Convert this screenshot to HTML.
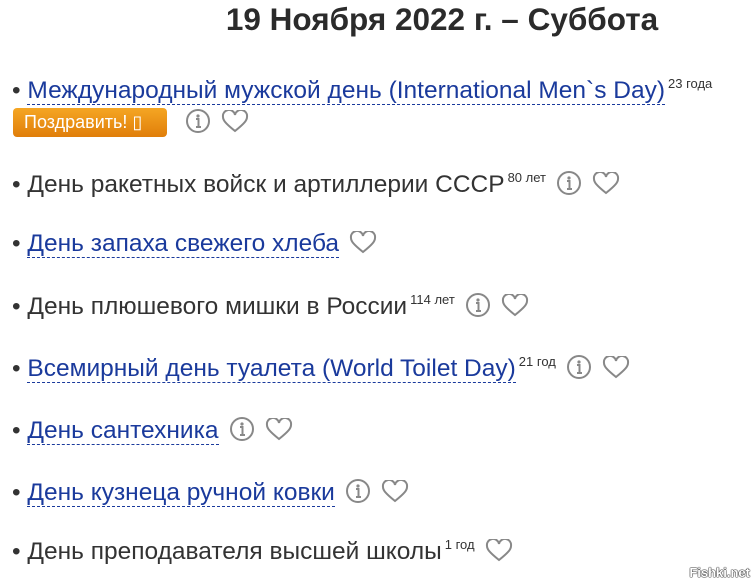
<!DOCTYPE html><html><head><meta charset="utf-8"><style>
body{margin:0;width:755px;height:584px;background:#fff;font-family:"Liberation Sans",Arial,sans-serif;color:#333;position:relative;overflow:hidden}
h1{position:absolute;left:0;width:884px;top:1px;margin:0;text-align:center;font-size:31.5px;font-weight:bold;color:#2b2b2b;line-height:36px}
.r{position:absolute;left:12px;font-size:24.5px;line-height:26px;white-space:nowrap}
a{color:#1a3a9c;text-decoration:none;border-bottom:1px dashed #1a3a9c}
sup{font-size:13px;vertical-align:0;position:relative;top:-10px;margin-left:3px}
svg{vertical-align:-4px;margin-left:10px}
.btn{position:absolute;left:13px;top:108px;width:154px;height:29px;border-radius:4px;background:linear-gradient(#f5a623,#e07e0a);color:#fff;font-size:18px;line-height:29px;padding-left:11px;box-sizing:border-box}
.wm{position:absolute;right:5px;bottom:4px;font-size:13px;font-weight:bold;color:#fff;text-shadow:0 0 1px #000,0 0 1px #000,0 0 1px #000}
</style></head><body>
<h1>19 Ноября 2022 г. – Суббота</h1>
<div class="r" style="top:78px">• <a>Международный мужской день (International Men`s Day)</a><sup>23 года</sup></div>
<div class="btn">Поздравить! ▯</div>
<div class="r" style="left:175px;top:108px"><svg width="26" height="26" viewBox="0 0 26 26"><circle cx="13" cy="13" r="11" fill="none" stroke="#888" stroke-width="2"/><circle cx="13" cy="8" r="1.6" fill="#888"/><path d="M11 11h2.5v8M11 19h5" stroke="#888" stroke-width="2" fill="none"/></svg><svg width="28" height="24" viewBox="0 0 28 24"><path d="M14 21C4 13 2 10 2 7a5.5 5.5 0 0 1 12-2a5.5 5.5 0 0 1 12 2c0 3-2 6-12 14z" fill="none" stroke="#888" stroke-width="2"/></svg></div>
<div class="r" style="top:170px">• День ракетных войск и артиллерии СССР<sup>80 лет</sup><svg width="26" height="26" viewBox="0 0 26 26"><circle cx="13" cy="13" r="11" fill="none" stroke="#888" stroke-width="2"/><circle cx="13" cy="8" r="1.6" fill="#888"/><path d="M11 11h2.5v8M11 19h5" stroke="#888" stroke-width="2" fill="none"/></svg><svg width="28" height="24" viewBox="0 0 28 24"><path d="M14 21C4 13 2 10 2 7a5.5 5.5 0 0 1 12-2a5.5 5.5 0 0 1 12 2c0 3-2 6-12 14z" fill="none" stroke="#888" stroke-width="2"/></svg></div>
<div class="r" style="top:231px">• <a>День запаха свежего хлеба</a><svg width="28" height="24" viewBox="0 0 28 24"><path d="M14 21C4 13 2 10 2 7a5.5 5.5 0 0 1 12-2a5.5 5.5 0 0 1 12 2c0 3-2 6-12 14z" fill="none" stroke="#888" stroke-width="2"/></svg></div>
<div class="r" style="top:292px">• День плюшевого мишки в России<sup>114 лет</sup><svg width="26" height="26" viewBox="0 0 26 26"><circle cx="13" cy="13" r="11" fill="none" stroke="#888" stroke-width="2"/><circle cx="13" cy="8" r="1.6" fill="#888"/><path d="M11 11h2.5v8M11 19h5" stroke="#888" stroke-width="2" fill="none"/></svg><svg width="28" height="24" viewBox="0 0 28 24"><path d="M14 21C4 13 2 10 2 7a5.5 5.5 0 0 1 12-2a5.5 5.5 0 0 1 12 2c0 3-2 6-12 14z" fill="none" stroke="#888" stroke-width="2"/></svg></div>
<div class="r" style="top:354px">• <a>Всемирный день туалета (World Toilet Day)</a><sup>21 год</sup><svg width="26" height="26" viewBox="0 0 26 26"><circle cx="13" cy="13" r="11" fill="none" stroke="#888" stroke-width="2"/><circle cx="13" cy="8" r="1.6" fill="#888"/><path d="M11 11h2.5v8M11 19h5" stroke="#888" stroke-width="2" fill="none"/></svg><svg width="28" height="24" viewBox="0 0 28 24"><path d="M14 21C4 13 2 10 2 7a5.5 5.5 0 0 1 12-2a5.5 5.5 0 0 1 12 2c0 3-2 6-12 14z" fill="none" stroke="#888" stroke-width="2"/></svg></div>
<div class="r" style="top:416px">• <a>День сантехника</a><svg width="26" height="26" viewBox="0 0 26 26"><circle cx="13" cy="13" r="11" fill="none" stroke="#888" stroke-width="2"/><circle cx="13" cy="8" r="1.6" fill="#888"/><path d="M11 11h2.5v8M11 19h5" stroke="#888" stroke-width="2" fill="none"/></svg><svg width="28" height="24" viewBox="0 0 28 24"><path d="M14 21C4 13 2 10 2 7a5.5 5.5 0 0 1 12-2a5.5 5.5 0 0 1 12 2c0 3-2 6-12 14z" fill="none" stroke="#888" stroke-width="2"/></svg></div>
<div class="r" style="top:478px">• <a>День кузнеца ручной ковки</a><svg width="26" height="26" viewBox="0 0 26 26"><circle cx="13" cy="13" r="11" fill="none" stroke="#888" stroke-width="2"/><circle cx="13" cy="8" r="1.6" fill="#888"/><path d="M11 11h2.5v8M11 19h5" stroke="#888" stroke-width="2" fill="none"/></svg><svg width="28" height="24" viewBox="0 0 28 24"><path d="M14 21C4 13 2 10 2 7a5.5 5.5 0 0 1 12-2a5.5 5.5 0 0 1 12 2c0 3-2 6-12 14z" fill="none" stroke="#888" stroke-width="2"/></svg></div>
<div class="r" style="top:539px">• День преподавателя высшей школы<sup>1 год</sup><svg width="28" height="24" viewBox="0 0 28 24"><path d="M14 21C4 13 2 10 2 7a5.5 5.5 0 0 1 12-2a5.5 5.5 0 0 1 12 2c0 3-2 6-12 14z" fill="none" stroke="#888" stroke-width="2"/></svg></div>
<div class="wm">Fishki.net</div>
</body></html>
